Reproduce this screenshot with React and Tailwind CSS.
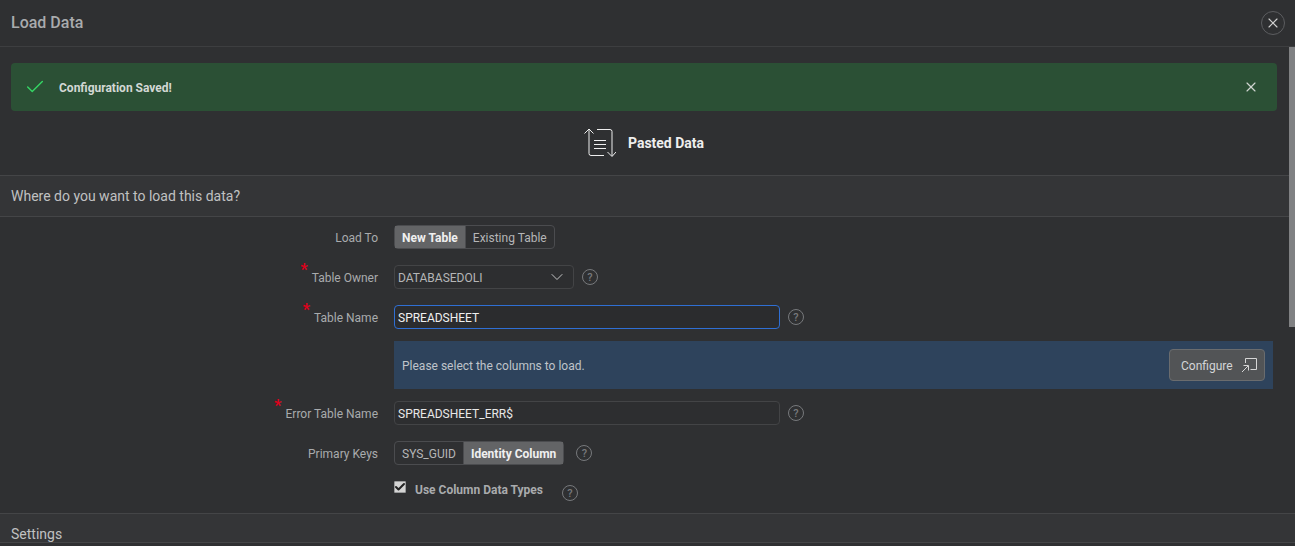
import { Check, X, ChevronDown } from 'lucide-react';

const font = { fontFamily: 'Roboto, sans-serif' };

function Help({ className = '' }) {
  return (
    <span className={`flex items-center justify-center w-4 h-4 rounded-full border border-[#77797c] text-[#77797c] text-[11px] font-medium leading-none ${className}`}>
      ?
    </span>
  );
}

function Row({ label, required, className = '', children }) {
  return (
    <div className={`flex items-center h-6 ${className}`}>
      <div className="w-[394px] pr-4 pt-px flex justify-end text-xs text-[#a9abad]">
        {required && <span className="text-[#e0001b] text-base font-bold leading-none -mt-2 mr-1">*</span>}
        <span>{label}</span>
      </div>
      {children}
    </div>
  );
}

function PastedIcon() {
  return (
    <svg width="32" height="30" viewBox="0 0 32 30" fill="none" stroke="#eeeeee" strokeWidth="1" className="block">
      <path d="M0.5 5.5 L5 1 L9.5 5.5 M5 1 V25.5 Q5 27.5 7 27.5 H20" />
      <path d="M13 1.5 H26 Q28 1.5 28 3.5 V28 M23.5 24 L28 28.5 L32 24" />
      <path d="M10 12.5 H22 M10 16.5 H22 M10 20.5 H22" />
    </svg>
  );
}

function ConfigureIcon() {
  return (
    <svg width="16" height="16" viewBox="0 0 16 16" fill="none" stroke="#d6d6d6" strokeWidth="1">
      <path d="M4.5 6 V1.5 H15.5 V12.5 H9.5" />
      <path d="M1 15 L7 9 M2.5 8.5 H7.5 V13.5" />
    </svg>
  );
}

export default function App() {
  return (
    <div style={font} className="relative w-[1295px] h-[546px] overflow-hidden bg-[#2f3032] text-[#c9cacb]">
      {/* Dialog title */}
      <div className="flex items-center justify-between h-[47px] pl-[11px] pr-[10px] border-b border-[#3d3e40]">
        <span className="text-base font-medium text-[#a9abad]">Load Data</span>
        <button className="flex items-center justify-center w-6 h-6 rounded-full border border-[#5c5d60] text-[#d0d0d0]">
          <X className="w-4 h-4" strokeWidth={1.75} />
        </button>
      </div>

      {/* Scrollbar thumb */}
      <div className="absolute left-[1289px] top-[47px] w-[6px] h-[280px] bg-[#808183]" />

      {/* Success alert */}
      <div className="flex items-center h-12 mt-4 ml-[11px] w-[1266px] rounded-sm bg-[#2b5035]">
        <Check className="w-[22px] h-[22px] ml-[13px] text-[#35d765]" strokeWidth={1.5} />
        <span className="ml-[13px] pt-px text-xs font-bold text-[#d3d8d4]">Configuration Saved!</span>
        <X className="w-4 h-4 ml-auto mr-[18px] text-[#d0d5d1]" strokeWidth={1.75} />
      </div>

      {/* Source */}
      <div className="flex items-center justify-center gap-3 h-16 pr-[7px]">
        <PastedIcon />
        <span className="text-sm font-bold text-[#eeeeee]">Pasted Data</span>
      </div>

      {/* Load target section */}
      <div className="flex items-center h-[42px] pl-[11px] bg-[#343537] border-y border-[#444547] text-sm text-[#c0c1c2]">
        Where do you want to load this data?
      </div>

      <div className="pt-2">
        <Row label="Load To">
          <div className="flex h-6 text-xs rounded-sm border border-[#4b4c4f]">
            <span className="flex items-center pt-px px-[7px] bg-[#636466] border-r border-[#4b4c4f] font-bold text-[#f0f0f0]">New Table</span>
            <span className="flex items-center pt-px px-[7px] text-[#b5b6b7]">Existing Table</span>
          </div>
        </Row>

        <Row label="Table Owner" required className="mt-4">
          <div className="flex items-center justify-between w-[180px] h-6 pl-[3px] pr-[6px] text-xs rounded-sm border border-[#434446] bg-[#2d2e30] text-[#b5b6b7]">
            <span className="pt-px">DATABASEDOLI</span>
            <ChevronDown className="w-5 h-5 text-[#c4c5c6]" strokeWidth={1.2} />
          </div>
          <Help className="ml-2" />
        </Row>

        <Row label="Table Name" required className="mt-4">
          <div className="flex items-center w-[386px] h-6 pl-[3px] pt-px text-xs rounded-sm border border-[#2f6fd4] bg-[#2b2c2e] text-[#f0f0f0]">
            SPREADSHEET
          </div>
          <Help className="ml-2" />
        </Row>

        {/* Columns notice */}
        <div className="flex items-center justify-between ml-[394px] w-[879px] h-12 mt-3 pl-2 pr-2 bg-[#2e435c] text-xs text-[#bfc4ca]">
          <span className="pt-px">Please select the columns to load.</span>
          <button className="flex items-center gap-2 w-24 h-8 pl-[11px] rounded-sm border border-[#6a6c6e] bg-[#525456] text-[#d4d5d6]">
            <span className="pt-px">Configure</span>
            <ConfigureIcon />
          </button>
        </div>

        <Row label="Error Table Name" required className="mt-3">
          <div className="flex items-center w-[386px] h-6 pl-[3px] pt-px text-xs rounded-sm border border-[#434446] bg-[#2d2e30] text-[#e8e8e8]">
            SPREADSHEET_ERR$
          </div>
          <Help className="ml-2" />
        </Row>

        <Row label="Primary Keys" className="mt-4">
          <div className="flex h-6 text-xs rounded-sm border border-[#4b4c4f]">
            <span className="flex items-center pt-px px-[7px] border-r border-[#4b4c4f] text-[#b5b6b7]">SYS_GUID</span>
            <span className="flex items-center pt-px px-[7px] bg-[#636466] font-bold text-[#f0f0f0]">Identity Column</span>
          </div>
          <Help className="ml-3" />
        </Row>

        <div className="flex ml-[394px] mt-[11px] h-[33px]">
          <span className="flex items-center justify-center w-3 h-3 mt-[5px] rounded-[1px] border border-[#9a9b9c] bg-[#d4d4d4]">
            <Check className="w-3 h-3 shrink-0 text-[#222222]" strokeWidth={4} />
          </span>
          <span className="ml-[9px] mt-[6px] text-xs font-bold text-[#a9abad]">Use Column Data Types</span>
          <Help className="ml-[19px] mt-[9px]" />
        </div>
      </div>

      {/* Settings section */}
      <div className="h-[30px] mt-[4px] pl-[11px] pt-[10px] bg-[#343537] border-y border-[#444547] text-sm text-[#c0c1c2]">
        Settings
      </div>
    </div>
  );
}
